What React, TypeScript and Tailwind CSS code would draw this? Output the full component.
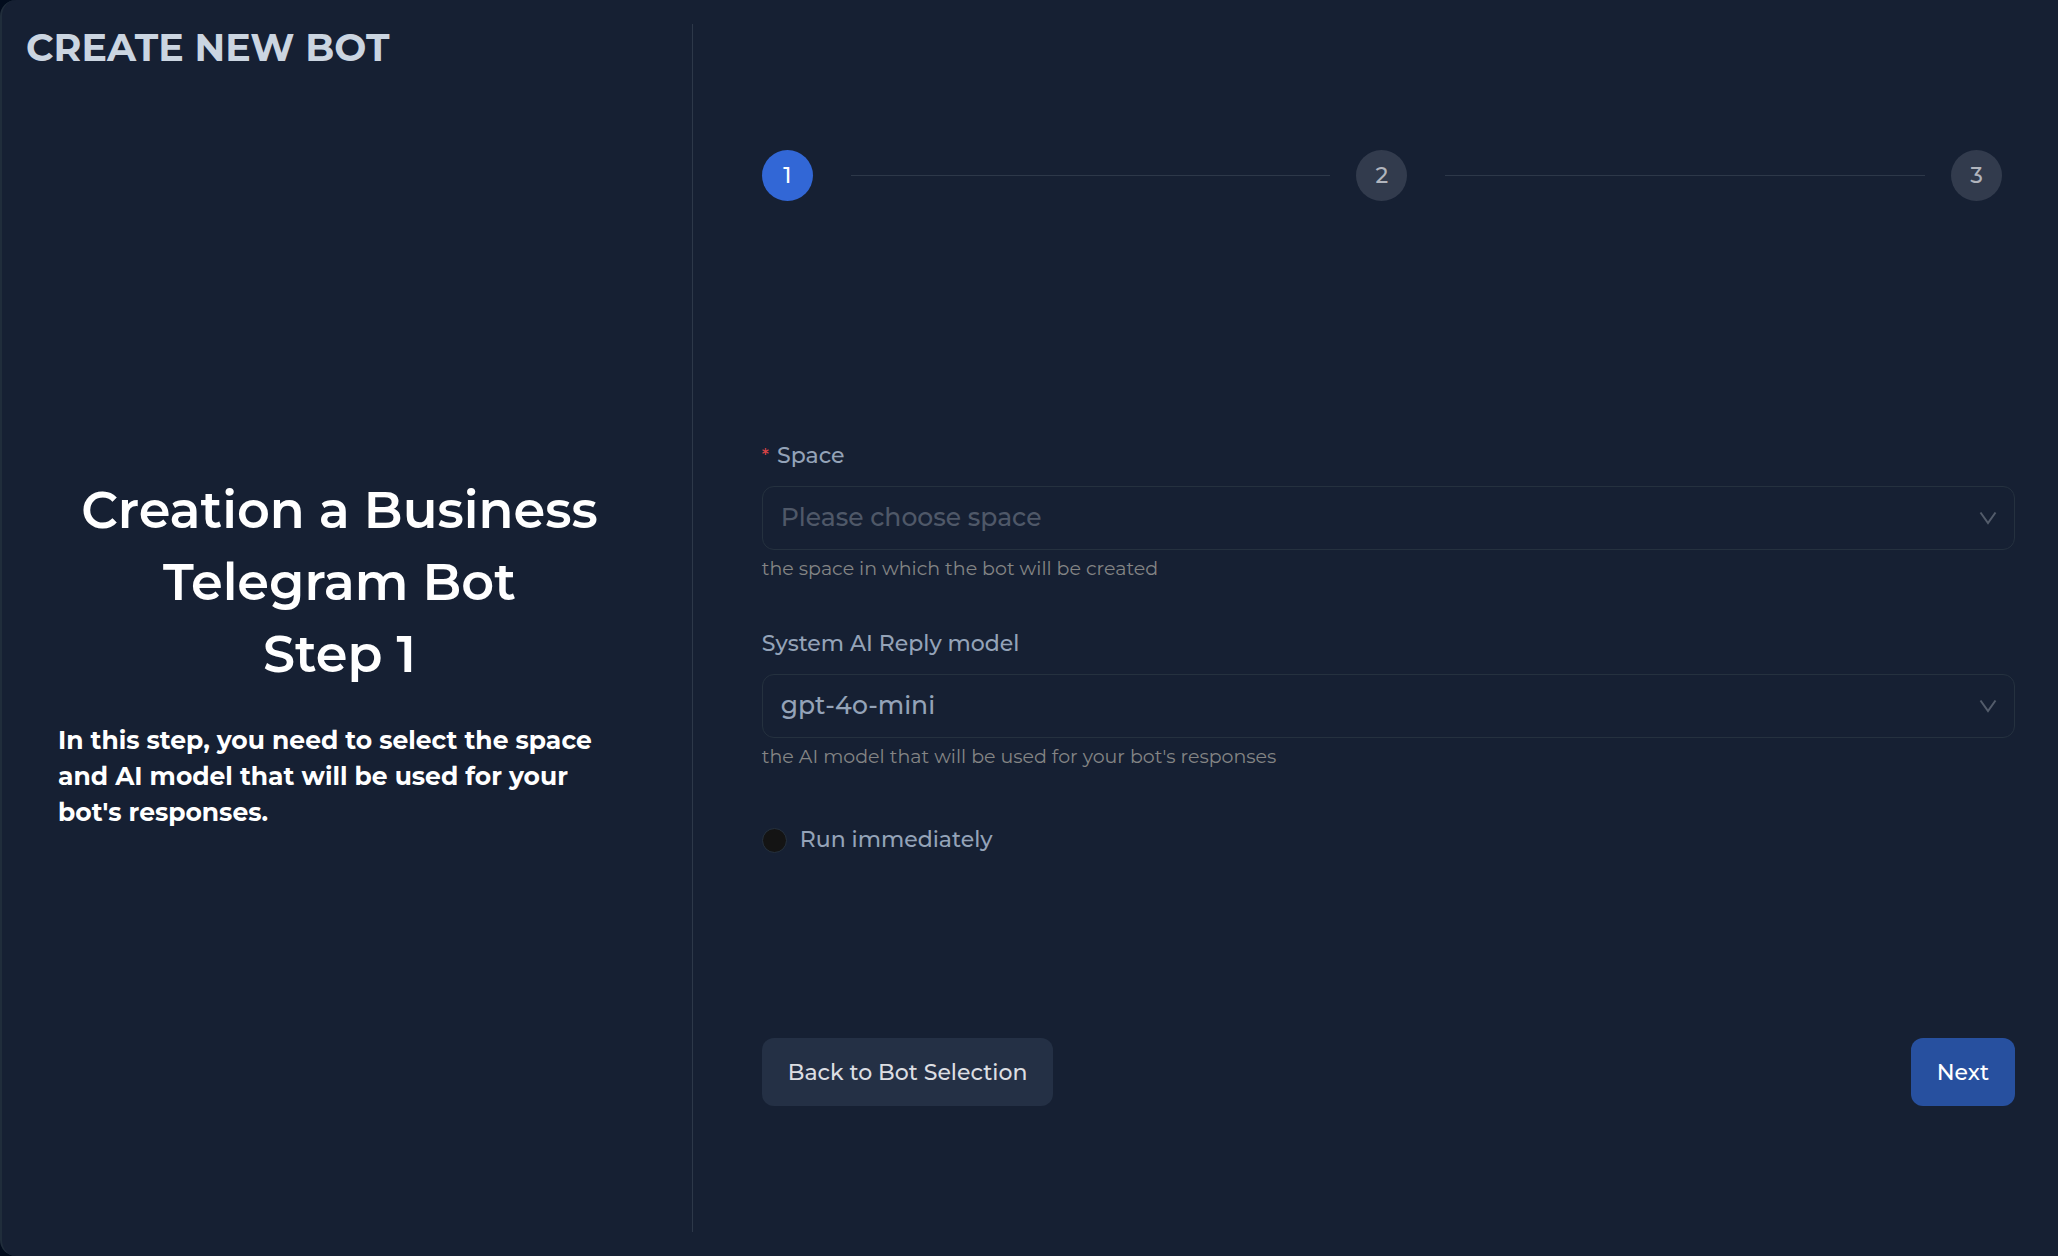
import { useId, useState } from "react";
import type { ReactNode } from "react";

const steps = [1, 2, 3];

function Steps({ current }: { current: number }) {
  return (
    <ol className="mr-[13px] flex items-center">
      {steps.map((step, i) => (
        <li
          key={step}
          aria-current={step === current ? "step" : undefined}
          className={i > 0 ? "flex flex-1 items-center" : "flex items-center"}
        >
          {i > 0 && <span className="mr-[26px] ml-[38px] h-px flex-1 bg-[#2d3849]" />}
          <span
            className={
              step === current
                ? "flex size-[51px] items-center justify-center rounded-full bg-[#3267d6] text-[22px] font-medium text-white"
                : "flex size-[51px] items-center justify-center rounded-full bg-[#323b4d] text-[22px] font-medium text-[#b1b5bd]"
            }
          >
            {step}
          </span>
        </li>
      ))}
    </ol>
  );
}

type FieldProps = {
  label: string;
  hint: string;
  required?: boolean;
  value: string;
  onChange: (value: string) => void;
  children: ReactNode;
};

function SelectField({ label, hint, required, value, onChange, children }: FieldProps) {
  const id = useId();
  return (
    <div className="flex flex-col">
      <label htmlFor={id} className="flex h-8 items-center gap-2 text-[22px] leading-8 font-medium text-[#94a3b8]">
        {required && <span className="text-[18px] text-[#dc4446]">*</span>}
        {label}
      </label>
      <div className="relative mt-[14px]">
        <select
          id={id}
          required={required}
          value={value}
          onChange={(e) => onChange(e.target.value)}
          className={
            value
              ? "block h-16 w-full appearance-none rounded-xl border border-[#25313f] bg-transparent pr-12 pl-[18px] text-[25px] font-medium text-[#94a3b8]"
              : "block h-16 w-full appearance-none rounded-xl border border-[#25313f] bg-transparent pr-12 pl-[18px] text-[25px] font-medium text-[#4f5868]"
          }
        >
          {children}
        </select>
        <svg
          viewBox="0 0 18 14"
          className="pointer-events-none absolute top-1/2 right-[18px] h-[14px] w-[18px] -translate-y-1/2"
          fill="none"
          stroke="#535c6b"
          strokeWidth="2"
          aria-hidden="true"
        >
          <path d="M1.5 1.5 9 12l7.5-10.5" />
        </svg>
      </div>
      <p className="mt-1 text-[19px] leading-[30px] text-[#848585]">{hint}</p>
    </div>
  );
}

export default function App() {
  const [space, setSpace] = useState("");
  const [model, setModel] = useState("gpt-4o-mini");

  return (
    <div className="min-h-screen bg-[#020c1d] font-['Montserrat','Inter',sans-serif]">
      <main className="flex min-h-screen rounded-l-2xl border-l-2 border-[#202d3b] bg-[#162033] py-6">
        <section className="relative flex w-[33.6%] flex-col justify-center border-r border-[#2d3849] pt-12 pr-[39px] pl-6">
          <h1 className="absolute top-0 left-6 text-[38px] leading-[48px] font-bold text-[#cbd5e1]">
            CREATE NEW BOT
          </h1>
          <div className="flex flex-col gap-8 px-8 text-white">
            <h2 className="text-center text-[51px] leading-[72px] font-semibold">
              Creation a Business Telegram Bot
              <br />
              Step 1
            </h2>
            <p className="text-[25px] leading-9 font-bold">
              In this step, you need to select the space and AI model that will be used for your bot's responses.
            </p>
          </div>
        </section>

        <form
          className="flex flex-1 flex-col pt-[126px] pr-[43px] pl-[69px]"
          onSubmit={(e) => e.preventDefault()}
        >
          <Steps current={1} />
          <div className="mt-[239px] flex flex-col gap-11">
            <SelectField
              label="Space"
              hint="the space in which the bot will be created"
              required
              value={space}
              onChange={setSpace}
            >
              <option value="">Please choose space</option>
            </SelectField>
            <SelectField
              label="System AI Reply model"
              hint="the AI model that will be used for your bot's responses"
              value={model}
              onChange={setModel}
            >
              <option value="gpt-4o-mini">gpt-4o-mini</option>
            </SelectField>
          </div>
          <label className="mt-[52px] flex items-center gap-[13px] self-start text-[22px] leading-8 font-medium text-[#94a3b8]">
            <input
              type="checkbox"
              className="size-[25px] appearance-none rounded-full border border-[#25313f] bg-[#141414] checked:bg-[#3267d6]"
            />
            Run immediately
          </label>
          <div className="mt-[182px] flex justify-between text-[22px] font-medium">
            <button type="button" className="h-[68px] rounded-xl bg-[#243045] px-[26px] text-[#dcdee2]">
              Back to Bot Selection
            </button>
            <button type="submit" className="h-[68px] rounded-xl bg-[#27509f] px-[26px] text-white">
              Next
            </button>
          </div>
        </form>
      </main>
    </div>
  );
}
